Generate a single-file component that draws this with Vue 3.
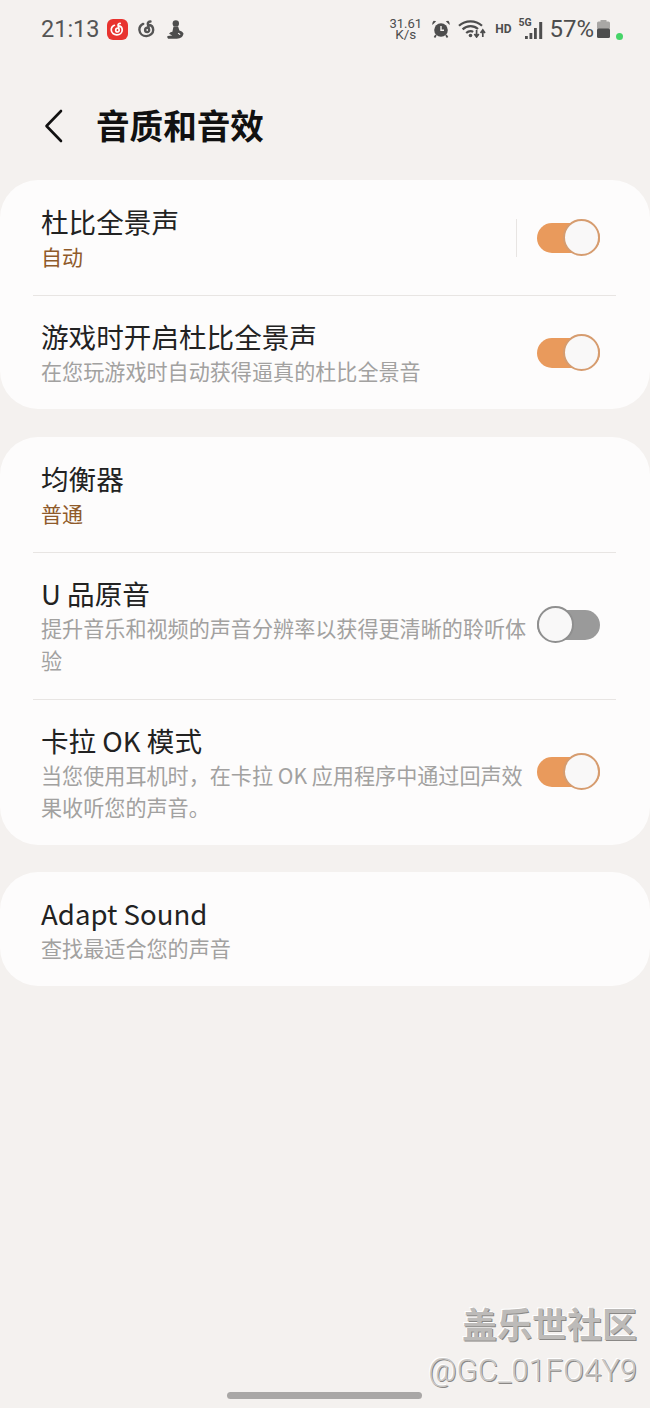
<script setup>
const groups = [
  [
    { title: '杜比全景声', value: '自动', toggle: true, split: true },
    { title: '游戏时开启杜比全景声', sub: '在您玩游戏时自动获得逼真的杜比全景音', toggle: true },
  ],
  [
    { title: '均衡器', value: '普通' },
    { title: 'U 品原音', sub: '提升音乐和视频的声音分辨率以获得更清晰的聆听体验', toggle: false },
    { title: '卡拉 OK 模式', sub: '当您使用耳机时\uff0c在卡拉 OK 应用程序中通过回声效果收听您的声音。', toggle: true },
  ],
  [
    { title: 'Adapt Sound', sub: '查找最适合您的声音' },
  ],
]
</script>

<template>
  <div class="page">
    <div class="status">
      <div class="status-left">
        <span class="time">21:13</span>
        <svg class="red-icon" width="21" height="21" viewBox="0 0 21 21">
          <rect width="21" height="21" rx="6" fill="#e8332f" />
          <path d="M13.2 4.300c-1.500 0-2.400 1-2.100 2.300l1 4.200c.3 1.200-.5 2.200-1.600 2.200-1 0-1.800-.7-1.800-1.700 0-1.100.8-2 2.100-2.100M7.400 6.300C5.300 7.300 4.100 9 4.300 11.200c.2 2.700 2.600 4.700 5.600 4.600 3-.1 5.300-2.200 5.300-4.900 0-2-1.400-3.600-3.400-4" fill="none" stroke="#fff" stroke-width="1.700" stroke-linecap="round" />
        </svg>
        <svg class="spiral" width="18" height="19" viewBox="0 0 18 19">
          <path d="M12.500 1.500c-1.900 0-3 1.200-2.600 2.900l1.200 5.200c.3 1.400-.6 2.500-1.900 2.500-1.200 0-2.100-.9-2.100-2 0-1.400 1-2.400 2.500-2.600M5.200 3.900C2.600 5.200 1.200 7.300 1.400 10c.3 3.600 3.300 6.200 7.100 6.100 3.800-.1 6.700-2.800 6.700-6.200 0-2.600-1.800-4.700-4.400-5.200" fill="none" stroke="#555" stroke-width="2.400" stroke-linecap="round" />
        </svg>
        <svg class="figure" width="17" height="19" viewBox="0 0 17 19">
          <circle cx="8.800" cy="3.400" r="3.200" fill="#4d4d4d" />
          <path d="M6.500 6.500h4.600l1.300 4c1.600.4 3.500 1.500 4.100 3-.3 3-2.600 5-6.700 5.200H1.200C.2 18 .1 16.900.5 16l4.800-.4-3.200-1.800c.7-1.300 2.100-2 3.300-2z" fill="#4d4d4d" />
          <path d="M11 13.200c1 .3 1.700.9 2 1.600" fill="none" stroke="#f4f1ef" stroke-width="1.200" />
        </svg>
      </div>
      <div class="status-right">
        <div class="speed"><span>31.61</span><span class="unit">K/s</span></div>
        <svg class="alarm" width="18" height="18" viewBox="0 0 18 18">
          <circle cx="9" cy="10" r="6.800" fill="#4d4d4d" />
          <path d="M9 6v4.300h3" fill="none" stroke="#f4f1ef" stroke-width="1.400" />
          <path d="M.4 5 4.200 1.200 1.800.8C.7 1.400.1 3.300.4 5zM17.600 5 13.800 1.200l2.400-.4c1.100.6 1.700 2.500 1.400 4.200z" fill="#4d4d4d" />
          <path d="M4 15l-1.500 2.400M14 15l1.500 2.400" stroke="#4d4d4d" stroke-width="1.800" />
        </svg>
        <svg class="wifi" width="28" height="18" viewBox="0 0 28 18">
          <path d="M1 5.800C4 3 8 1.300 12.500 1.300s8.500 1.700 11.500 4.500M4.600 9.400C6.700 7.400 9.500 6.200 12.500 6.200s5.500 1 7.500 2.800M8.200 13c1.200-1.100 2.700-1.800 4.300-1.800 1 0 1.900.2 2.700.7" fill="none" stroke="#4d4d4d" stroke-width="2.200" />
          <circle cx="12.500" cy="15.500" r="1.800" fill="#4d4d4d" />
          <path d="M18.600 10v6M16.400 14l2.200 3 2.200-3M24.800 17v-6M22.600 13l2.200-3 2.200 3" fill="none" stroke="#4d4d4d" stroke-width="1.700" />
        </svg>
        <span class="hd">HD</span>
        <div class="signal">
          <span class="five-g">5G</span>
          <svg width="18" height="17" viewBox="0 0 18 17">
            <rect x="0" y="14" width="2.800" height="3" fill="#4d4d4d" />
            <rect x="4.500" y="11" width="2.800" height="6" fill="#4d4d4d" />
            <rect x="9" y="6" width="2.800" height="11" fill="#4d4d4d" />
            <rect x="14.200" y="0" width="3" height="17" fill="#4d4d4d" />
          </svg>
        </div>
        <span class="percent">57%</span>
        <svg class="battery" width="13" height="18" viewBox="0 0 13 18">
          <rect x="3.500" y="0" width="6" height="2" fill="#a9a7a5" />
          <rect x="0" y="1.500" width="13" height="8" rx="1.500" fill="#a9a7a5" />
          <rect x="0" y="8.500" width="13" height="9.500" rx="1.500" fill="#4d4d4d" />
        </svg>
        <span class="dot"></span>
      </div>
    </div>

    <div class="header">
      <svg class="back" width="20" height="34" viewBox="0 0 20 34">
        <path d="M17 2 2.500 17 17 32" fill="none" stroke="#111" stroke-width="2.600" stroke-linecap="round" stroke-linejoin="round" />
      </svg>
      <h1>音质和音效</h1>
    </div>

    <div class="cards">
      <div v-for="(rows, i) in groups" :key="i" class="card">
        <div v-for="row in rows" :key="row.title" class="row">
          <div class="texts">
            <div class="title">{{ row.title }}</div>
            <div v-if="row.value" class="value">{{ row.value }}</div>
            <div v-if="row.sub" class="sub">{{ row.sub }}</div>
          </div>
          <span v-if="row.split" class="split"></span>
          <div v-if="row.toggle !== undefined" :class="['toggle', row.toggle ? 'on' : 'off']">
            <span class="thumb"></span>
          </div>
        </div>
      </div>
    </div>

    <div class="watermark">
      <div class="wm-name">盖乐世社区</div>
      <div class="wm-id">@GC_01FO4Y9</div>
    </div>
    <div class="home-bar"></div>
  </div>
</template>

<style>
html, body {
  margin: 0;
  background: #f4f1ef;
}
</style>

<style scoped>
.page {
  position: relative;
  width: 650px;
  height: 1408px;
  overflow: hidden;
  background: #f4f1ef;
  font-family: "Noto Sans CJK SC", "Noto Sans", sans-serif;
}

.status {
  height: 58px;
  display: flex;
  justify-content: space-between;
  align-items: center;
  padding-left: 41px;
  padding-right: 27px;
  color: #4d4d4d;
  font-family: Roboto, sans-serif;
}

.status-left,
.status-right {
  display: flex;
  align-items: center;
}

.time {
  width: 57px;
  font-size: 23.500px;
  line-height: 28px;
  color: #555;
  white-space: nowrap;
}

.red-icon {
  margin-left: 9px;
}

.spiral {
  margin-left: 10px;
}

.figure {
  margin-left: 11px;
}

.speed {
  display: flex;
  flex-direction: column;
  align-items: center;
  gap: 1px;
  font-size: 13px;
  line-height: 10px;
}

.unit {
  font-size: 13.500px;
  line-height: 9px;
}

.alarm {
  margin-left: 10px;
}

.wifi {
  margin-left: 8px;
}

.hd {
  margin-left: 9px;
  font-size: 12px;
  font-weight: 700;
}

.signal {
  position: relative;
  margin-left: 14px;
  width: 18px;
  height: 17px;
  display: flex;
  top: 1px;
}

.five-g {
  position: absolute;
  left: -7px;
  top: -4px;
  font-size: 10.500px;
  line-height: 10px;
  font-weight: 700;
}

.percent {
  margin-left: 6px;
  font-size: 24px;
  line-height: 28px;
}

.battery {
  margin-left: 3px;
}

.dot {
  width: 7px;
  height: 7px;
  margin-left: 6px;
  margin-top: 14px;
  border-radius: 50%;
  background: #45d468;
}

.header {
  height: 122px;
  display: flex;
  align-items: center;
  padding-left: 44px;
  padding-top: 14px;
  box-sizing: border-box;
}

.back {
  flex: none;
}

h1 {
  margin: 0 0 2px 32px;
  font-size: 33.600px;
  line-height: 44px;
  font-weight: 700;
  color: #111;
}

.cards {
  display: flex;
  flex-direction: column;
  gap: 27.500px;
}

.card {
  padding: 0 34px 0 33px;
  background: #fdfcfc;
  border-radius: 38px;
}

.row {
  display: flex;
  align-items: center;
  padding: 21px 16px 23px 8px;
  border-top: 1px solid #e8e5e3;
}

.row:first-child {
  border-top: 0;
  padding-top: 22px;
}

.row:last-child {
  padding-bottom: 22px;
}

.texts {
  flex: 1;
  min-width: 0;
}

.title {
  font-size: 27.600px;
  line-height: 38px;
  color: #222;
}

.value {
  font-size: 21px;
  line-height: 32px;
  color: #8f5a2a;
}

.sub {
  font-size: 21.100px;
  line-height: 32px;
  color: #a2a1a0;
}

.split {
  width: 1px;
  height: 38px;
  margin: 2px 20px 0 0;
  background: #e8e5e3;
}

.toggle {
  position: relative;
  flex: none;
  width: 63px;
  height: 30px;
  border-radius: 15px;
  margin-top: 1px;
  margin-left: 10px;
}

.split + .toggle {
  margin-left: 0;
}

.toggle.on {
  background: #e99a5c;
}

.toggle.off {
  background: #9a9a9a;
}

.thumb {
  position: absolute;
  top: -4px;
  width: 37px;
  height: 37px;
  box-sizing: border-box;
  border-radius: 50%;
  background: #f9f8f8;
  border: 2px solid #d69c6f;
}

.on .thumb {
  right: 0;
}

.off .thumb {
  left: 0;
  border-color: #8f8f8f;
}

.watermark {
  position: absolute;
  right: 13px;
  bottom: 17px;
  text-align: right;
  text-shadow: 1px 1px 0 #8a8886, -1px -1px 0 #fff;
}

.wm-name {
  font-size: 35px;
  line-height: 46px;
  margin-bottom: 5px;
  font-weight: 700;
  color: #bdbbb9;
}

.wm-id {
  font-family: Roboto, sans-serif;
  font-size: 31px;
  font-weight: 300;
  line-height: 40px;
  color: #c9c7c5;
}

.home-bar {
  position: absolute;
  left: 227px;
  top: 1392px;
  width: 195px;
  height: 7px;
  border-radius: 4px;
  background: #a9a7a6;
}
</style>
